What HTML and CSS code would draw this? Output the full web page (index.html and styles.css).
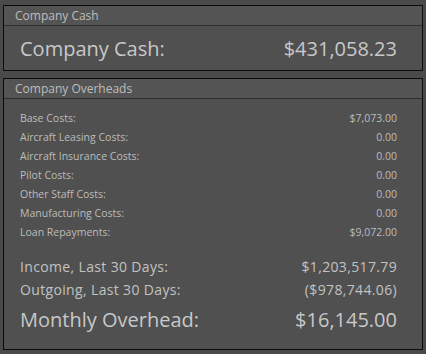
FILE: index.html
```html
<!DOCTYPE html>
<html lang="en">
<head>
  <meta charset="UTF-8">
  <title>Company Finances</title>
  <link rel="stylesheet" href="styles.css">
</head>
<body>

  <div class="panel cash-panel">
    <div class="panel-title">Company Cash</div>
    <div class="panel-body">
      <div class="big-row">
        <span>Company Cash:</span>
        <span>$431,058.23</span>
      </div>
    </div>
  </div>

  <div class="panel overheads-panel">
    <div class="panel-title">Company Overheads</div>
    <div class="panel-body">
      <div class="costs">
        <div class="cost-row"><span>Base Costs:</span><span>$7,073.00</span></div>
        <div class="cost-row"><span>Aircraft Leasing Costs:</span><span>0.00</span></div>
        <div class="cost-row"><span>Aircraft Insurance Costs:</span><span>0.00</span></div>
        <div class="cost-row"><span>Pilot Costs:</span><span>0.00</span></div>
        <div class="cost-row"><span>Other Staff Costs:</span><span>0.00</span></div>
        <div class="cost-row"><span>Manufacturing Costs:</span><span>0.00</span></div>
        <div class="cost-row"><span>Loan Repayments:</span><span>$9,072.00</span></div>
      </div>

      <div class="totals">
        <div class="total-row"><span>Income, Last 30 Days:</span><span>$1,203,517.79</span></div>
        <div class="total-row"><span>Outgoing, Last 30 Days:</span><span>($978,744.06)</span></div>
        <div class="big-row monthly"><span>Monthly Overhead:</span><span>$16,145.00</span></div>
      </div>
    </div>
  </div>

</body>
</html>
```

FILE: styles.css
```css
body {
  font-family: 'Open Sans', sans-serif;
  margin: 0;
  padding: 5px 3px 0 3px;
  background: #4a4a4a;
  color: #c4c4c4;
  width: 420px;
}

.panel {
  border: 1px solid #0c0c0c;
  background: #505050;
}

.cash-panel {
  height: 64px;
}

.overheads-panel {
  margin-top: 7px;
  height: 270px;
}

.panel-title {
  height: 19px;
  line-height: 19px;
  padding-left: 11px;
  font-size: 12px;
  color: #bdbdbd;
  background: #545454;
  border-bottom: 1px solid #2e2e2e;
}

.panel-body {
  padding: 0 25px 0 16px;
}

.big-row {
  display: flex;
  justify-content: space-between;
  align-items: center;
  height: 30px;
  font-size: 20px;
  color: #c8c8c8;
  margin-top: 7px;
}

.costs {
  padding-top: 10px;
}

.cost-row {
  display: flex;
  justify-content: space-between;
  height: 19px;
  line-height: 19px;
  font-size: 10.5px;
  color: #bcbcbc;
}

.total-row {
  display: flex;
  justify-content: space-between;
  height: 23px;
  line-height: 23px;
  font-size: 14px;
  letter-spacing: 0.35px;
  color: #c2c2c2;
}

.totals {
  padding-top: 13px;
}

.monthly {
  margin-top: 3px;
}
```
